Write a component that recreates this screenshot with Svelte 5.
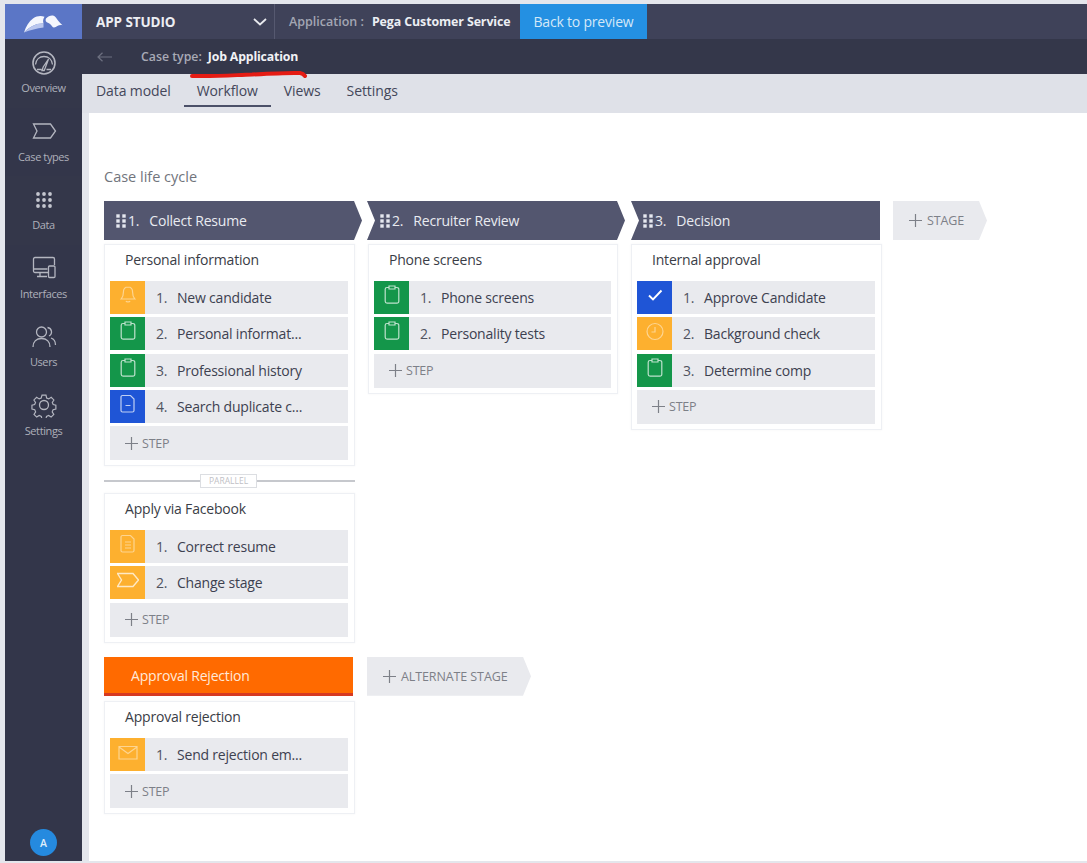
<script>
  const nav = [
    { id: 'overview', label: 'Overview', cls: 'lighter' },
    { id: 'case', label: 'Case types', cls: '' },
    { id: 'data', label: 'Data', cls: 'lighter' },
    { id: 'interfaces', label: 'Interfaces', cls: '' },
    { id: 'users', label: 'Users', cls: '' },
    { id: 'settings', label: 'Settings', cls: '' }
  ];
  const tabs = ['Data model', 'Workflow', 'Views', 'Settings'];
  const personal = [
    { c: 'amber', i: 'bell', t: 'New candidate' },
    { c: 'green', i: 'clip', t: 'Personal informat...' },
    { c: 'green', i: 'clip', t: 'Professional history' },
    { c: 'blue', i: 'doc', t: 'Search duplicate c...' }
  ];
  const facebook = [
    { c: 'amber', i: 'file', t: 'Correct resume' },
    { c: 'amber bright', i: 'flag', t: 'Change stage' }
  ];
  const phone = [
    { c: 'green', i: 'clip', t: 'Phone screens' },
    { c: 'green', i: 'clip', t: 'Personality tests' }
  ];
  const internal = [
    { c: 'blue', i: 'check', t: 'Approve Candidate' },
    { c: 'amber', i: 'clock', t: 'Background check' },
    { c: 'green', i: 'clip', t: 'Determine comp' }
  ];
  const rejection = [{ c: 'amber', i: 'mail', t: 'Send rejection em...' }];
</script>

{#snippet grip()}
  <svg class="grip" width="10" height="14" viewBox="0 0 10 14" aria-hidden="true">
    {#each [2, 8] as x}
      {#each [2, 7, 12] as y}
        <rect x={x - 1.7} y={y - 1.7} width="3.4" height="3.4" fill="#e6e8f0" />
      {/each}
    {/each}
  </svg>
{/snippet}

{#snippet plus()}
  <svg class="plus" width="13" height="13" viewBox="0 0 13 13" aria-hidden="true">
    <path d="M6.5 0v13M0 6.5h13" stroke="#7d8088" stroke-width="1.2" fill="none" />
  </svg>
{/snippet}

{#snippet stepIcon(kind)}
  <svg width="22" height="24" viewBox="0 0 22 24" fill="none" stroke="#ffffff" stroke-opacity="0.72" stroke-width="1.2" aria-hidden="true">
    {#if kind === 'bell'}
      <path d="M11 4c-3.200 0-4.600 2.600-4.600 5.200 0 3.600-.8 5.400-2.200 6.800h13.600c-1.400-1.400-2.200-3.200-2.200-6.800 0-2.600-1.400-5.200-4.600-5.200zM9 18c.4 1.300 3.600 1.300 4 0" />
    {:else if kind === 'clip'}
      <path d="M8 4.500h-2a1.800 1.800 0 0 0-1.800 1.800v12a1.800 1.800 0 0 0 1.800 1.800h10a1.800 1.800 0 0 0 1.800-1.800v-12a1.800 1.800 0 0 0-1.800-1.800h-2M8 3h6v3h-6z" />
    {:else if kind === 'doc'}
      <path d="M5.500 3.500h8l3.500 3.500v11.500a1.500 1.500 0 0 1-1.500 1.500h-10a1.500 1.500 0 0 1-1.500-1.500v-13.500a1.500 1.500 0 0 1 1.500-1.500zM8.500 13.500h5" />
    {:else if kind === 'file'}
      <path d="M5.500 3.500h8l3.500 3.500v11.500a1.500 1.500 0 0 1-1.500 1.500h-10a1.500 1.500 0 0 1-1.500-1.500v-13.500a1.500 1.500 0 0 1 1.500-1.500zM8 10h6M8 13h6M8 16h6" />
    {:else if kind === 'flag'}
      <path d="M.5 5.500h15.500l5.500 6.500-5.500 6.500h-15.500l4-6.500z" stroke-width="1.400" />
    {:else if kind === 'check'}
      <path d="M5 12.500l4 4 8.500-9" stroke-width="1.900" stroke-opacity="1" />
    {:else if kind === 'clock'}
      <circle cx="11" cy="12.500" r="8" /><path d="M11 8v5h-3.500" />
    {:else if kind === 'mail'}
      <path d="M2 6.500h18v12.500h-18zM2 7l9 6.500 9-6.500" />
    {/if}
  </svg>
{/snippet}

{#snippet process(title, steps)}
  <section class="card">
    <h3>{title}</h3>
    <ol>
      {#each steps as s, n}
        <li class="step">
          <span class="tile {s.c}">{@render stepIcon(s.i)}</span>
          <span class="num">{n + 1}.</span>
          <span class="name">{s.t}</span>
        </li>
      {/each}
      <li class="add">{@render plus()}<span>STEP</span></li>
    </ol>
  </section>
{/snippet}

<div class="shell">
  <aside class="rail">
    <div class="logo">
      <svg width="40" height="18" viewBox="0 0 40 18" aria-hidden="true">
        <path d="M0 17.500C2 11 5 6.500 9 3.500 13 .8 17 .5 20.500 1.800 19 4 18.800 6 19.500 8.500 12 8 6 11.500 0 17.500z" fill="#f4f6fd" />
        <path d="M19.500 8.500C12 8 6 11.500 0 17.500 6 15 13 13.500 19.500 12.500z" fill="#b9c6ee" />
        <path d="M22 3.500C24 1.200 27 0 29 .5c2.500.7 3.500 3 5 5 1.300 1.700 3 3.200 4.500 4.700-2-.3-3.800 0-5.200.8-1 .6-2 1.500-3.300 1.500-1.500 0-2.500-2.200-4-3.500-1.300-1.100-3-1.500-4-2.500-.5-.8-.5-2.200 0-3z" fill="#f4f6fd" />
      </svg>
    </div>
    <nav>
      {#each nav as item}
        <div class="nav-item {item.cls}">
          <svg width="26" height="26" viewBox="0 0 26 26" fill="none" stroke="#b4b6c0" stroke-width="1.300" aria-hidden="true">
            {#if item.id === 'overview'}
              <circle cx="13" cy="13" r="11" stroke-width="1.600" /><path d="M4.500 14.500c.5-5 4-8 8.500-8s8 3 8.500 8M6 19.500h4.500M15.500 19.500H20M11 20.500l1.200-3.500 5.300-8-3.300 9-1 2.500z" />
            {:else if item.id === 'case'}
              <path d="M2.500 6h17l5 7-5 7h-17l3.500-7z" />
            {:else if item.id === 'data'}
              {#each [7, 13, 19] as x}
                {#each [7, 13, 19] as y}
                  <circle cx={x} cy={y} r="1.900" fill="#c4c6cf" stroke="none" />
                {/each}
              {/each}
            {:else if item.id === 'interfaces'}
              <path d="M17 17.500H4a1.500 1.500 0 0 1-1.500-1.500V4A1.500 1.500 0 0 1 4 2.500h18A1.500 1.500 0 0 1 23.500 4v6M2.500 14h14M9 17.500v3.500M6 21.500h10" />
              <rect x="17.500" y="11" width="6.500" height="11.500" rx="1" />
            {:else if item.id === 'users'}
              <circle cx="10.500" cy="8" r="5" /><path d="M2 23c0-5.500 3.500-8.500 8.500-8.500s8.500 3 8.500 8.500M16.500 3.500a4.500 4.500 0 0 1 1.500 8.500M20 14c3 1 4.500 3.500 4.500 7" />
            {:else}
              <circle cx="13" cy="13" r="4.500" />
              <path d="M10.800 2h4.400l.7 3.200 2.300 1 2.800-1.800 3 3-1.800 2.800 1 2.300 3 .7v4.400l-3.100.7-1 2.300 1.800 2.800-3 3-2.800-1.800-2.300 1-.7 3h-4.400l-.7-3-2.300-1-2.800 1.800-3-3 1.800-2.800-1-2.300-3.100-.7v-4.400l3-.7 1-2.300-1.800-2.800 3-3 2.800 1.800 2.300-1z" transform="translate(1.300 1.300) scale(.9)" />
            {/if}
          </svg>
          <span>{item.label}</span>
        </div>
      {/each}
    </nav>
    <div class="avatar">A</div>
  </aside>

  <div class="main">
    <header class="topbar">
      <div class="studio">
        <strong>APP STUDIO</strong>
        <svg width="14" height="8" viewBox="0 0 14 8" aria-hidden="true"><path d="M1 1l6 5.500L13 1" stroke="#e8e9ee" stroke-width="1.800" fill="none" /></svg>
      </div>
      <div class="appname">Application :<b>Pega Customer Service</b></div>
      <button class="preview">Back to preview</button>
    </header>

    <div class="casebar">
      <svg class="back" width="15" height="10" viewBox="0 0 15 10" aria-hidden="true"><path d="M15 5H1M5.500 .7L1 5l4.500 4.300" stroke="#6d7080" stroke-width="1.200" fill="none" /></svg>
      <span class="label">Case type:</span><b>Job Application</b>
      <svg class="scribble" width="120" height="10" viewBox="0 0 120 10" aria-hidden="true">
        <path d="M2 6C30 6.500 45 5 62 4.500 80 3.500 100 2.500 110 3c3 .4 4 1.600 5 3" stroke="#e51c14" stroke-width="4" stroke-linecap="round" fill="none" />
      </svg>
    </div>

    <div class="tabs">
      {#each tabs as t}
        <span class="tab" class:active={t === 'Workflow'}>{t}</span>
      {/each}
    </div>

    <main class="canvas">
      <h2>Case life cycle</h2>
      <div class="board">
        <div class="stage first">{@render grip()}<span class="sn">1.</span><span>Collect Resume</span></div>
        <div class="stage mid">{@render grip()}<span class="sn">2.</span><span>Recruiter Review</span></div>
        <div class="stage last">{@render grip()}<span class="sn">3.</span><span>Decision</span></div>
        <div class="ghost stage-add">{@render plus()}<span>STAGE</span></div>

        <div class="stack">
          {@render process('Personal information', personal)}
          <div class="parallel"><span>PARALLEL</span></div>
          {@render process('Apply via Facebook', facebook)}
        </div>
        <div class="stack two">{@render process('Phone screens', phone)}</div>
        <div class="stack">{@render process('Internal approval', internal)}</div>
        <div></div>

        <div class="alt">Approval Rejection</div>
        <div class="ghost alt-add">{@render plus()}<span>ALTERNATE STAGE</span></div>
        <div class="stack alt-card">{@render process('Approval rejection', rejection)}</div>
      </div>
    </main>
  </div>
</div>

<style>
  :global(body) {
    margin: 0;
    background: #e4e6ec;
  }
  .shell {
    display: flex;
    width: 1087px;
    height: 863px;
    box-sizing: border-box;
    padding: 4px 0 2px 5px;
    overflow: hidden;
    font-family: "Open Sans", "Noto Sans", sans-serif;
    font-size: 14px;
    color: #3d4150;
  }
  .rail {
    width: 77px;
    flex: none;
    display: flex;
    flex-direction: column;
    background: #33364a;
    color: #aeb0ba;
  }
  .logo {
    height: 35px;
    flex: none;
    display: flex;
    align-items: center;
    justify-content: center;
    background: #5b76c6;
  }
  .logo svg { margin: 4px 0 0 1px; }
  nav { display: flex; flex-direction: column; }
  .nav-item {
    height: 68.6px;
    box-sizing: border-box;
    padding-top: 10.500px;
    display: flex;
    flex-direction: column;
    align-items: center;
    gap: 4.500px;
    font-size: 11px;
    letter-spacing: -0.4px;
    line-height: 15px;
  }
  .nav-item.lighter { background: #34374a; }
  .avatar {
    margin: auto 0 5px 25px;
    width: 27px;
    height: 27px;
    border-radius: 50%;
    background: #258adf;
    color: #dfeefb;
    font-size: 10.500px;
    font-weight: 600;
    display: flex;
    align-items: center;
    justify-content: center;
  }
  .main {
    flex: 1;
    min-width: 0;
    display: flex;
    flex-direction: column;
  }
  .topbar {
    height: 35px;
    flex: none;
    display: flex;
    align-items: stretch;
    background: #3f4259;
  }
  .studio {
    width: 193px;
    box-sizing: border-box;
    padding: 0 7px 0 14px;
    display: flex;
    align-items: center;
    justify-content: space-between;
    border-right: 1px solid #565970;
    color: #eceef3;
  }
  .studio strong { font-size: 13.500px; font-weight: 700; letter-spacing: -0.1px; }
  .appname {
    padding-left: 14px;
    width: 245px;
    box-sizing: border-box;
    display: flex;
    align-items: center;
    gap: 8px;
    font-size: 12.500px;
    color: #a3a6b3;
    font-weight: 600;
    white-space: nowrap;
  }
  .appname b { color: #eceef3; font-weight: 700; font-size: 12.400px; letter-spacing: -0.1px; }
  .preview {
    width: 127px;
    margin: 0;
    border: 0;
    padding: 0;
    background: #2490e2;
    color: #d4e8f8;
    font: 400 14px "Open Sans", sans-serif;
    letter-spacing: -0.2px;
  }
  .casebar {
    position: relative;
    height: 35px;
    flex: none;
    display: flex;
    align-items: center;
    background: #34374a;
    font-size: 12.300px;
  }
  .back { margin: 0 0 0 15px; }
  .label { margin-left: 29px; color: #a8aab6; font-weight: 600; }
  .casebar b { margin-left: 6px; color: #f1f2f5; font-size: 12.300px; font-weight: 700; letter-spacing: -0.15px; }
  .scribble { position: absolute; left: 108px; top: 31px; z-index: 2; }
  .tabs {
    height: 39px;
    flex: none;
    box-sizing: border-box;
    display: flex;
    align-items: flex-start;
    padding: 0 0 0 1px;
    background: #dfe1e8;
    font-size: 14px;
    color: #44475a;
  }
  .tab {
    padding: 7px 13px 0;
    height: 33px;
    box-sizing: border-box;
    letter-spacing: -0.1px;
    white-space: nowrap;
  }
  .tab.active { border-bottom: 2px solid #4b5068; }
  .canvas {
    flex: 1;
    margin-left: 7px;
    padding: 53px 0 0 15px;
    background: #ffffff;
    min-height: 0;
  }
  h2 {
    margin: 0 0 13px;
    font-size: 14.500px;
    line-height: 22px;
    font-weight: 500;
    color: #71747c;
  }
  .board {
    display: grid;
    grid-template-columns: 263px 264px 262px 1fr;
    align-items: start;
  }
  .stage {
    height: 39px;
    box-sizing: border-box;
    display: flex;
    align-items: center;
    background: #53566f;
    color: #e9ebf1;
    font-size: 14px;
    letter-spacing: -0.2px;
    white-space: nowrap;
  }
  .sn { margin: 0 10px 0 2px; }
  .grip { flex: none; }
  .first {
    width: 258px;
    padding-left: 12px;
    clip-path: polygon(0 0, 250px 0, 100% 50%, 250px 100%, 0 100%);
  }
  .mid {
    width: 258px;
    padding-left: 13px;
    clip-path: polygon(0 0, 250px 0, 100% 50%, 250px 100%, 0 100%, 8px 50%);
  }
  .last {
    width: 249px;
    padding-left: 12px;
    clip-path: polygon(0 0, 100% 0, 100% 100%, 0 100%, 8px 50%);
  }
  .ghost {
    height: 39px;
    box-sizing: border-box;
    display: flex;
    align-items: center;
    gap: 5px;
    background: #e9eaee;
    color: #7d8088;
    font-size: 12.500px;
    letter-spacing: -0.1px;
    clip-path: polygon(0 0, calc(100% - 8px) 0, 100% 50%, calc(100% - 8px) 100%, 0 100%);
    white-space: nowrap;
  }
  .stage-add { width: 94px; padding-left: 16px; }
  .stack {
    display: flex;
    flex-direction: column;
    width: 251px;
    padding-top: 4px;
  }
  .two { margin-left: 1px; width: 250px; }
  .card {
    box-sizing: border-box;
    border: 1px solid #eef0f4;
    background: #ffffff;
    padding: 0 6px 5px 5px;
    box-shadow: 0 0 2px rgba(60, 65, 90, 0.06);
  }
  h3 {
    margin: 0;
    padding: 5px 0 0 15px;
    height: 36px;
    box-sizing: border-box;
    font-size: 14px;
    line-height: 19px;
    font-weight: 400;
    color: #3a3d46;
    letter-spacing: -0.2px;
  }
  ol {
    list-style: none;
    margin: 0;
    padding: 0;
    display: flex;
    flex-direction: column;
    gap: 3.300px;
  }
  .step {
    height: 33px;
    display: flex;
    align-items: center;
    background: #e9eaee;
    color: #3d4150;
    letter-spacing: -0.2px;
    white-space: nowrap;
  }
  .tile {
    width: 35px;
    height: 33px;
    flex: none;
    display: flex;
    align-items: flex-start;
    justify-content: center;
    padding-top: 2px;
    box-sizing: border-box;
  }
  .amber { background: #fdb02f; }
  .amber svg { opacity: 0.65; }
  .amber.bright svg { opacity: 1; }
  .green { background: #14964a; }
  .blue { background: #1f55d6; }
  .num { margin-left: 11px; width: 21px; color: #50535e; }
  .add {
    height: 34px;
    display: flex;
    align-items: center;
    gap: 4px;
    padding-left: 15px;
    background: #e9eaee;
    color: #7d8088;
    font-size: 12.500px;
    letter-spacing: -0.2px;
  }
  .parallel {
    height: 27px;
    box-sizing: border-box;
    padding-top: 3px;
    display: flex;
    align-items: center;
    justify-content: center;
    background: linear-gradient(#c6c8cd, #c6c8cd) 0 14px / 100% 2px no-repeat;
  }
  .parallel span {
    width: 57px;
    height: 14px;
    box-sizing: border-box;
    border: 1px solid #dcdee2;
    background: #ffffff;
    color: #bfc1c6;
    font-size: 8.500px;
    line-height: 12px;
    text-align: center;
    margin-left: -2px;
  }
  .alt {
    grid-column: 1;
    width: 249px;
    height: 39px;
    box-sizing: border-box;
    margin-top: 14px;
    padding: 2px 0 0 27px;
    display: flex;
    align-items: center;
    background: #ff6a00;
    border-bottom: 3px solid #d63a22;
    color: #ffe9d8;
    font-size: 14px;
    letter-spacing: -0.2px;
  }
  .alt-add {
    grid-column: 2 / 4;
    width: 164px;
    padding-left: 16px;
    margin-top: 14px;
  }
  .alt-card { grid-column: 1; padding-top: 5px; }
</style>
